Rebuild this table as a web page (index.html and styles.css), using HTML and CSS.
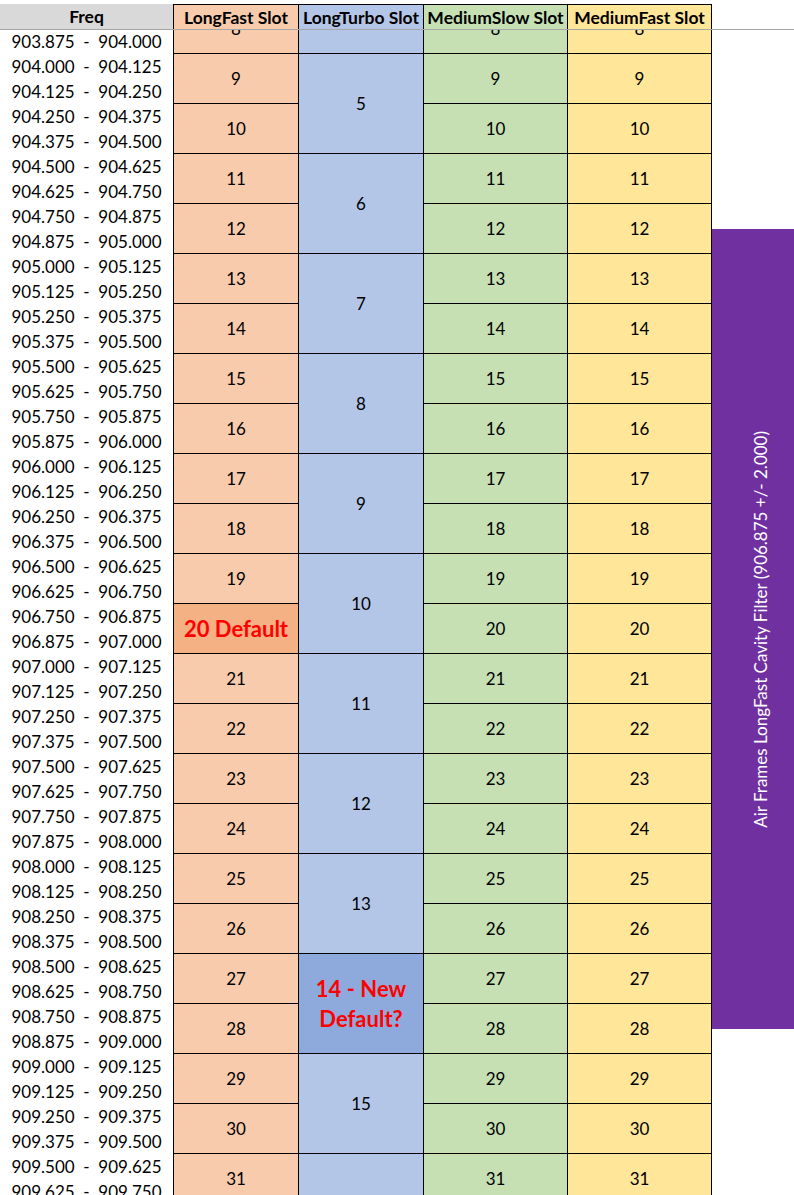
FILE: index.html
```html
<!DOCTYPE html>
<html>
<head>
<meta charset="utf-8">
<link rel="stylesheet" href="styles.css">
</head>
<body>
<div class="head">
  <div class="hcell h-freq">Freq</div>
  <div class="hcell w-lf lf-bg">LongFast Slot</div>
  <div class="hcell w-lt lt-bg">LongTurbo Slot</div>
  <div class="hcell w-ms ms-bg">MediumSlow Slot</div>
  <div class="hcell w-mf mf-bg last">MediumFast Slot</div>
  <div class="filler"></div>
</div>
<div class="sheet">
  <div class="grid">
    <div class="col freq">
      <div class="f">903.750  -  903.875</div>
      <div class="f">903.875  -  904.000</div>
      <div class="f">904.000  -  904.125</div>
      <div class="f">904.125  -  904.250</div>
      <div class="f">904.250  -  904.375</div>
      <div class="f">904.375  -  904.500</div>
      <div class="f">904.500  -  904.625</div>
      <div class="f">904.625  -  904.750</div>
      <div class="f">904.750  -  904.875</div>
      <div class="f">904.875  -  905.000</div>
      <div class="f">905.000  -  905.125</div>
      <div class="f">905.125  -  905.250</div>
      <div class="f">905.250  -  905.375</div>
      <div class="f">905.375  -  905.500</div>
      <div class="f">905.500  -  905.625</div>
      <div class="f">905.625  -  905.750</div>
      <div class="f">905.750  -  905.875</div>
      <div class="f">905.875  -  906.000</div>
      <div class="f">906.000  -  906.125</div>
      <div class="f">906.125  -  906.250</div>
      <div class="f">906.250  -  906.375</div>
      <div class="f">906.375  -  906.500</div>
      <div class="f">906.500  -  906.625</div>
      <div class="f">906.625  -  906.750</div>
      <div class="f">906.750  -  906.875</div>
      <div class="f">906.875  -  907.000</div>
      <div class="f">907.000  -  907.125</div>
      <div class="f">907.125  -  907.250</div>
      <div class="f">907.250  -  907.375</div>
      <div class="f">907.375  -  907.500</div>
      <div class="f">907.500  -  907.625</div>
      <div class="f">907.625  -  907.750</div>
      <div class="f">907.750  -  907.875</div>
      <div class="f">907.875  -  908.000</div>
      <div class="f">908.000  -  908.125</div>
      <div class="f">908.125  -  908.250</div>
      <div class="f">908.250  -  908.375</div>
      <div class="f">908.375  -  908.500</div>
      <div class="f">908.500  -  908.625</div>
      <div class="f">908.625  -  908.750</div>
      <div class="f">908.750  -  908.875</div>
      <div class="f">908.875  -  909.000</div>
      <div class="f">909.000  -  909.125</div>
      <div class="f">909.125  -  909.250</div>
      <div class="f">909.250  -  909.375</div>
      <div class="f">909.375  -  909.500</div>
      <div class="f">909.500  -  909.625</div>
      <div class="f">909.625  -  909.750</div>
    </div>
    <div class="col w-lf lf">
      <div class="c s2">8</div>
      <div class="c s2">9</div>
      <div class="c s2">10</div>
      <div class="c s2">11</div>
      <div class="c s2">12</div>
      <div class="c s2">13</div>
      <div class="c s2">14</div>
      <div class="c s2">15</div>
      <div class="c s2">16</div>
      <div class="c s2">17</div>
      <div class="c s2">18</div>
      <div class="c s2">19</div>
      <div class="c s2 lf-default red">20 Default</div>
      <div class="c s2">21</div>
      <div class="c s2">22</div>
      <div class="c s2">23</div>
      <div class="c s2">24</div>
      <div class="c s2">25</div>
      <div class="c s2">26</div>
      <div class="c s2">27</div>
      <div class="c s2">28</div>
      <div class="c s2">29</div>
      <div class="c s2">30</div>
      <div class="c s2">31</div>
    </div>
    <div class="col w-lt lt">
      <div class="c s2"></div>
      <div class="c s4">5</div>
      <div class="c s4">6</div>
      <div class="c s4">7</div>
      <div class="c s4">8</div>
      <div class="c s4">9</div>
      <div class="c s4">10</div>
      <div class="c s4">11</div>
      <div class="c s4">12</div>
      <div class="c s4">13</div>
      <div class="c s4 lt-default red">14 - New<br>Default?</div>
      <div class="c s4">15</div>
      <div class="c s2"></div>
    </div>
    <div class="col w-ms ms">
      <div class="c s2">8</div>
      <div class="c s2">9</div>
      <div class="c s2">10</div>
      <div class="c s2">11</div>
      <div class="c s2">12</div>
      <div class="c s2">13</div>
      <div class="c s2">14</div>
      <div class="c s2">15</div>
      <div class="c s2">16</div>
      <div class="c s2">17</div>
      <div class="c s2">18</div>
      <div class="c s2">19</div>
      <div class="c s2">20</div>
      <div class="c s2">21</div>
      <div class="c s2">22</div>
      <div class="c s2">23</div>
      <div class="c s2">24</div>
      <div class="c s2">25</div>
      <div class="c s2">26</div>
      <div class="c s2">27</div>
      <div class="c s2">28</div>
      <div class="c s2">29</div>
      <div class="c s2">30</div>
      <div class="c s2">31</div>
    </div>
    <div class="col w-mf mf last">
      <div class="c s2">8</div>
      <div class="c s2">9</div>
      <div class="c s2">10</div>
      <div class="c s2">11</div>
      <div class="c s2">12</div>
      <div class="c s2">13</div>
      <div class="c s2">14</div>
      <div class="c s2">15</div>
      <div class="c s2">16</div>
      <div class="c s2">17</div>
      <div class="c s2">18</div>
      <div class="c s2">19</div>
      <div class="c s2">20</div>
      <div class="c s2">21</div>
      <div class="c s2">22</div>
      <div class="c s2">23</div>
      <div class="c s2">24</div>
      <div class="c s2">25</div>
      <div class="c s2">26</div>
      <div class="c s2">27</div>
      <div class="c s2">28</div>
      <div class="c s2">29</div>
      <div class="c s2">30</div>
      <div class="c s2">31</div>
    </div>
    <div class="col side">
      <div class="side-gap"></div>
      <div class="filter"><span class="filter-text">Air Frames LongFast Cavity Filter (906.875 +/- 2.000)</span></div>
    </div>
  </div>
</div>
</body>
</html>
```

FILE: styles.css
```css
* { box-sizing: border-box; }
html, body { margin: 0; padding: 0; background: #fff; }
body {
  width: 794px;
  height: 1195px;
  overflow: hidden;
  padding-top: 4px;
  font-family: Lato, "Open Sans", sans-serif;
  font-size: 17px;
  color: #000;
}
.head {
  display: flex;
  height: 26px;
  border-bottom: 1px solid #a6a6a6;
}
.hcell {
  display: flex;
  align-items: center;
  justify-content: center;
  font-weight: 700;
  font-size: 17.5px;
  white-space: nowrap;
  border-top: 1px solid #000;
  border-left: 1px solid #000;
}
.h-freq { width: 173px; background: #d9d9d9; border: none; }
.w-lf { width: 125px; flex: none; }
.w-lt { width: 125px; flex: none; }
.w-ms { width: 144px; flex: none; }
.w-mf { width: 145px; flex: none; }
.hcell.last { border-right: 1px solid #000; }
.lf-bg { background: #f8cbad; }
.lt-bg { background: #b4c6e7; }
.ms-bg { background: #c6e0b4; }
.mf-bg { background: #ffe699; }
.filler { flex: 1; }

.sheet { height: 1165px; overflow: hidden; }
.grid { display: flex; margin-top: -26px; }
.col { display: flex; flex-direction: column; }
.freq { width: 173px; flex: none; }
.f {
  height: 25px;
  display: flex;
  align-items: center;
  justify-content: center;
  white-space: pre;
}
.c {
  flex: none;
  display: flex;
  align-items: center;
  justify-content: center;
  text-align: center;
  border-left: 1px solid #000;
  border-bottom: 1px solid #000;
}
.last .c { border-right: 1px solid #000; }
.s2 { height: 50px; }
.s4 { height: 100px; }
.lf .c { background: #f8cbad; }
.lt .c { background: #b4c6e7; }
.ms .c { background: #c6e0b4; }
.mf .c { background: #ffe699; }
.lf .lf-default { background: #f4b183; }
.lt .lt-default { background: #8ea9db; line-height: 30px; }
.red { color: #ff0000; font-weight: 700; font-size: 22px; }

.side { flex: 1; }
.side-gap { height: 225px; }
.filter {
  height: 800px;
  background: #7030a0;
  display: flex;
  align-items: center;
  justify-content: center;
  padding-left: 14px;
}
.filter-text {
  writing-mode: vertical-rl;
  transform: rotate(180deg);
  color: #fff;
  white-space: nowrap;
}
```
